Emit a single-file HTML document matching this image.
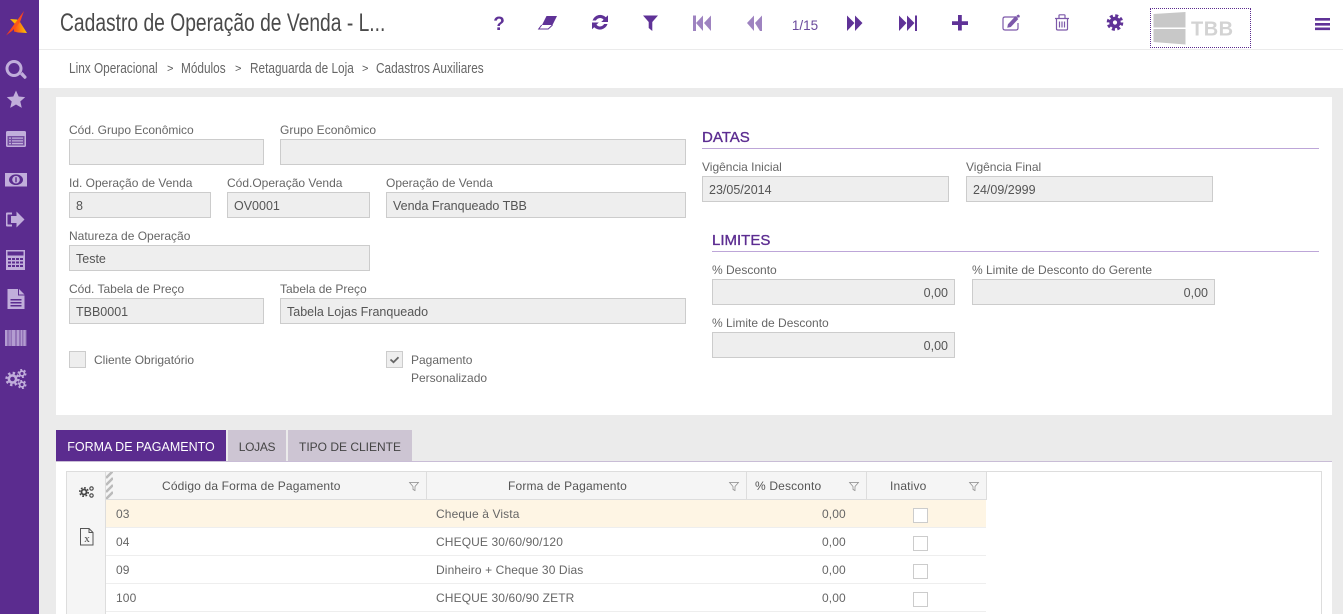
<!DOCTYPE html>
<html lang="pt-BR"><head><meta charset="utf-8"><title>Cadastro</title>
<style>
html,body{margin:0;padding:0;width:1343px;height:614px;overflow:hidden;background:#ebebeb;font-family:"Liberation Sans",sans-serif}
div,span,svg{position:absolute;box-sizing:border-box}
.t{white-space:nowrap;transform-origin:0 50%}
.l{font-size:12px;color:#666;line-height:14px;white-space:nowrap}
.f{background:#eee;border:1px solid #ccc;height:26px;font-size:12.5px;color:#555;line-height:26px;padding:0 6px;white-space:nowrap}
.r{text-align:right;padding-right:6px}
.h{font-size:15px;color:#5c2d91;line-height:18px;white-space:nowrap;-webkit-text-stroke:.35px #5c2d91}
.hl{height:1px;background:#bda6d8}
.bc{font-size:14.5px;color:#666;line-height:18px;white-space:nowrap;transform:scaleX(.815);transform-origin:0 50%}
.sep{font-size:11px;color:#555;line-height:14px}
.g{font-size:12px;color:#666;line-height:14px;white-space:nowrap;letter-spacing:.12px}
.gh{font-size:12px;color:#555;line-height:14px;white-space:nowrap;letter-spacing:.16px}
.row{left:106px;width:880px;height:28px;border-bottom:1px solid #eee;background:#fff}
.cb{width:15px;height:15px;border:1px solid #ccc;background:#fff;left:913px}
.tab{top:430px;height:31px;background:#cdc5d3;color:#444;font-size:12px;line-height:34px;text-align:center;white-space:nowrap}
</style></head><body>
<div style="left:0;top:0;width:1343px;height:88px;background:#fff"></div>
<div style="left:39px;top:49px;width:1304px;height:1px;background:#ebebeb"></div>
<div style="left:0;top:0;width:39px;height:614px;background:#5b2c8f"></div>

<svg style="left:0;top:0" width="39" height="400" viewBox="0 0 39 400">
<defs><linearGradient id="a" x1="0" y1="1" x2="1" y2="0"><stop offset="0" stop-color="#f5341c"/><stop offset=".55" stop-color="#fb5a17"/><stop offset="1" stop-color="#f93a22"/></linearGradient><linearGradient id="b" x1="0" y1="0" x2="1" y2="0"><stop offset="0" stop-color="#fb4a18"/><stop offset="1" stop-color="#fdc400"/></linearGradient></defs>
<path d="M10 19l7 .5 3 3-3.500 3z" fill="#fdbb05"/>
<path d="M14 27l6-5 7 11-9-.5-4-1z" fill="url(#b)"/>
<path d="M6 35.500L24 11l-4 11-3 4-5 5z" fill="url(#a)"/>
<g fill="#c1aedb">
<path fill-rule="evenodd" d="M14 60a8.500 8.500 0 1 0 0 17 8.500 8.500 0 0 0 0-17zm0 3a5.500 5.500 0 1 1 0 11 5.500 5.500 0 0 1 0-11z"/>
<path d="M20 74.500l2.500-2.500 4 4.500q.5 2-2 2.500z"/>
<path d="M16 90.500l2.700 6 6.500.6-4.900 4.400 1.500 6.400-5.800-3.400-5.800 3.400 1.500-6.400-4.900-4.400 6.500-.6z"/>
<rect x="6" y="131" width="20" height="16" rx="1.500"/>
<path fill="#5b2c8f" d="M7.500 136h17v9.500h-17z" opacity=".75"/>
<path d="M9 137.500h2v1.300H9zm3 0h11v1.300H12zM9 140.200h2v1.300H9zm3 0h11v1.300H12zM9 142.900h2v1.300H9zm3 0h11v1.300H12z"/>
<rect x="5" y="173" width="22" height="13.500"/>
<ellipse cx="16" cy="179.700" rx="7" ry="5.300" fill="#5b2c8f"/>
<circle cx="16" cy="179.700" r="3.800"/>
<path fill="#5b2c8f" d="M15.300 177.200h1.400v5h-1.400z"/>
<path d="M7 212.500h5v2H8q-.5 0-.5.500v9q0 .5.500.5h4v2H7q-1 0-1-1v-12q0-1 1-1z"/>
<path d="M11 216h5.500v-4.500L24.500 219.500l-8 8V223H11z"/>
<path fill-rule="evenodd" d="M6 250h19v20H6zm1.500 1.500v4h16v-4z"/>
<path fill="#5b2c8f" d="M8 258h3v2H8zm4 0h3v2h-3zm4 0h3v2h-3zm4 0h3v2h-3zM8 261.500h3v2H8zm4 0h3v2h-3zm4 0h3v2h-3zm4 0h3v2h-3zM8 265h3v2H8zm4 0h3v2h-3zm4 0h3v2h-3zm4 0h3v2h-3z"/>
<path fill-rule="evenodd" d="M7.500 289H18v6.500h6.500V309h-17zM10.500 299v1.500h11V299zm0 3v1.500h11V302zm0 3v1.500h11V305z"/>
<path d="M19 289l5.500 5.500H19z"/>
<rect x="5" y="330" width="21.500" height="16" opacity=".55"/>
<path d="M5 330h2v16H5zm4.500 0h1v16h-1zm2.500 0h3v16h-3zm5 0h2v16h-2zm4 0h1v16h-1zm2.500 0h2v16h-2z" opacity=".7"/>
<g fill="none" stroke="#c1aedb">
<circle cx="12.500" cy="379" r="3.600" stroke-width="2.600"/>
<circle cx="12.500" cy="379" r="6" stroke-width="2.400" stroke-dasharray="2.400 2.310"/>
<circle cx="22" cy="373.500" r="2.400" stroke-width="1.700"/>
<circle cx="22" cy="373.500" r="3.800" stroke-width="1.500" stroke-dasharray="2 1.980"/>
<circle cx="22" cy="384.500" r="2.400" stroke-width="1.700"/>
<circle cx="22" cy="384.500" r="3.800" stroke-width="1.500" stroke-dasharray="2 1.980"/>
</g>
</g></svg>

<div class="t" style="left:60px;top:8px;font-size:25px;line-height:30px;color:#4a4a4a;transform:scaleX(.77)">Cadastro de Operação de Venda - L...</div>

<svg style="left:480px;top:0" width="863" height="50" viewBox="480 0 863 50">
<g fill="#5f3297">
<text x="499" y="30" font-family="Liberation Sans" font-weight="700" font-size="19" text-anchor="middle">?</text>
<path d="M546.500 16H557l-4.500 9H542z"/>
<path d="M541.700 25l-3 4h9.500l4.300-4" fill="none" stroke="#5f3297" stroke-width="1"/>
<path d="M592.500 20.500a8 8 0 0 1 13.300-3.200l2.200-2.100v6.800h-6.800l2.400-2.300a4.700 4.700 0 0 0-7.700 .8zM607.500 24a8 8 0 0 1-13.300 3.200l-2.200 2.100v-6.800h6.800l-2.400 2.300a4.700 4.700 0 0 0 7.700-.8z"/>
<path d="M643 15.500h15l-5.700 6.500v9l-3.600-3v-6z"/>
<g opacity=".6"><path d="M693 15.500h3v15.500h-3zM696 23l7-7.500V31zM704 23l7-7.500V31z"/>
<path d="M747 23l7-7.500V31zM755 23l7-7.500V31h-2z"/></g>
<path d="M847 15.500l7.500 7.500-7.500 8zM855 15.500l7.500 7.500-7.500 8z"/>
<path d="M899 15.500l7.500 7.500-7.500 8zM907 15.500l7.500 7.500-7.500 8zM915 15.500h2V31h-2z"/>
<path d="M958 15h3.800v6.200h6.200v3.800h-6.200v5.500H958V25h-6v-3.800h6z"/>
</g>
<text x="805" y="30" font-size="13.500" text-anchor="middle" fill="#6a4a9c" font-family="Liberation Sans">1/15</text>
<g fill="none" stroke="#7d59aa" stroke-width="1.200">
<path d="M1018 17h-13q-2 0-2 2v9q0 2 2 2h11q2 0 2-2v-5"/>
<path d="M1008.500 24.500l-.5 2.500 2.500-.5 7-7.500-2-2z" fill="#7d59aa"/><path d="M1016.500 15.500l2-1 1.500 1.500-1 2z" fill="#7d59aa" stroke="none"/>
<path d="M1055 18.500h14M1059 18v-2.500q0-.7 .7-.7h4.600q.7 0 .7 .7V18M1056.500 18.500v10.500q0 1 1.500 1h8q1.500 0 1.500-1V18.500M1059.500 21.500v6M1062 21.500v6M1064.500 21.500v6"/>
</g>
<g fill="none" stroke="#5f3297">
<circle cx="1115" cy="22.500" r="3.900" stroke-width="3.600"/>
<circle cx="1115" cy="22.500" r="6.800" stroke-width="3" stroke-dasharray="3 2.340"/>
</g>
<path fill="#5f3297" d="M1315 18h15v2.600h-15zM1315 23h15v2.600h-15zM1315 27.500h15v2.600h-15z"/>
<path fill="#c8c8c8" d="M1153.500 14l32-2v15.500h-32zM1153.500 29h32v15.500l-32-2.500z"/>
<text x="1191" y="35.500" font-size="20" font-weight="700" letter-spacing=".5" fill="#d3d3d3" font-family="Liberation Sans">TBB</text>
</svg>
<div style="left:1150px;top:8px;width:101px;height:40px;border:1px dotted #5b2c8f"></div>

<div class="bc" style="left:69px;top:60px">Linx Operacional</div>
<div class="sep" style="left:167px;top:62px">&gt;</div>
<div class="bc" style="left:181px;top:60px">Módulos</div>
<div class="sep" style="left:235px;top:62px">&gt;</div>
<div class="bc" style="left:250px;top:60px">Retaguarda de Loja</div>
<div class="sep" style="left:362px;top:62px">&gt;</div>
<div class="bc" style="left:376px;top:60px">Cadastros Auxiliares</div>

<div style="left:56px;top:97px;width:1276px;height:318px;background:#fff"></div>

<div class="l" style="left:69px;top:123px">Cód. Grupo Econômico</div>
<div class="f" style="left:69px;top:139px;width:195px"></div>
<div class="l" style="left:280px;top:123px">Grupo Econômico</div>
<div class="f" style="left:280px;top:139px;width:406px"></div>

<div class="l" style="left:69px;top:176px">Id. Operação de Venda</div>
<div class="f" style="left:69px;top:192px;width:142px">8</div>
<div class="l" style="left:227px;top:176px">Cód.Operação Venda</div>
<div class="f" style="left:227px;top:192px;width:143px">OV0001</div>
<div class="l" style="left:386px;top:176px">Operação de Venda</div>
<div class="f" style="left:386px;top:192px;width:300px">Venda Franqueado TBB</div>

<div class="l" style="left:69px;top:229px">Natureza de Operação</div>
<div class="f" style="left:69px;top:245px;width:301px">Teste</div>

<div class="l" style="left:69px;top:282px">Cód. Tabela de Preço</div>
<div class="f" style="left:69px;top:298px;width:195px">TBB0001</div>
<div class="l" style="left:280px;top:282px">Tabela de Preço</div>
<div class="f" style="left:280px;top:298px;width:406px">Tabela Lojas Franqueado</div>

<div style="left:69px;top:351px;width:17px;height:17px;background:#eee;border:1px solid #ccc"></div>
<div class="l" style="left:94px;top:353px">Cliente Obrigatório</div>
<div style="left:386px;top:351px;width:17px;height:17px;background:#eee;border:1px solid #ccc"></div>
<svg style="left:386px;top:351px" width="17" height="17" viewBox="0 0 17 17"><path d="M4.500 8.500l3 2.700 5-5" fill="none" stroke="#666" stroke-width="1.800"/></svg>
<div class="l" style="left:411px;top:353px">Pagamento</div>
<div class="l" style="left:411px;top:371px">Personalizado</div>

<div class="h" style="left:702px;top:129px">DATAS</div>
<div class="hl" style="left:702px;top:148px;width:617px"></div>
<div class="l" style="left:702px;top:160px">Vigência Inicial</div>
<div class="f" style="left:702px;top:176px;width:247px">23/05/2014</div>
<div class="l" style="left:966px;top:160px">Vigência Final</div>
<div class="f" style="left:966px;top:176px;width:247px">24/09/2999</div>

<div class="h" style="left:712px;top:232px">LIMITES</div>
<div class="hl" style="left:712px;top:251px;width:607px"></div>
<div class="l" style="left:712px;top:263px">% Desconto</div>
<div class="f r" style="left:712px;top:279px;width:243px">0,00</div>
<div class="l" style="left:972px;top:263px">% Limite de Desconto do Gerente</div>
<div class="f r" style="left:972px;top:279px;width:243px">0,00</div>
<div class="l" style="left:712px;top:316px">% Limite de Desconto</div>
<div class="f r" style="left:712px;top:332px;width:243px">0,00</div>

<div class="tab" style="left:56px;width:170px;background:#5b2c8f;color:#fff;font-size:12.5px">FORMA DE PAGAMENTO</div>
<div class="tab" style="left:228px;width:58px;letter-spacing:-.3px">LOJAS</div>
<div class="tab" style="left:288px;width:124px">TIPO DE CLIENTE</div>
<div style="left:56px;top:461px;width:1276px;height:153px;background:#fff;border-top:1px solid #c9bdd6"></div>

<div style="left:66px;top:471px;width:1256px;height:143px;border:1px solid #ddd;border-bottom:0;background:#fff"></div>
<div style="left:67px;top:472px;width:39px;height:142px;background:#f5f5f5;border-right:1px solid #ddd"></div>
<div style="left:106px;top:472px;width:881px;height:28px;background:#f5f5f5;border-bottom:1px solid #ddd;border-right:1px solid #ddd"></div>
<div style="left:426px;top:472px;width:1px;height:27px;background:#ddd"></div>
<div style="left:746px;top:472px;width:1px;height:27px;background:#ddd"></div>
<div style="left:866px;top:472px;width:1px;height:27px;background:#ddd"></div>
<svg style="left:106px;top:472px" width="7" height="27" viewBox="0 0 7 27"><path d="M0 6l7-7M0 13l7-7M0 20l7-7M0 27l7-7" stroke="#bbb" stroke-width="2.500"/></svg>

<div class="gh" style="left:162px;top:479px">Código da Forma de Pagamento</div>
<div class="gh" style="left:508px;top:479px">Forma de Pagamento</div>
<div class="gh" style="left:755px;top:479px">% Desconto</div>
<div class="gh" style="left:890px;top:479px">Inativo</div>
<svg style="left:0;top:470px" width="1000" height="30" viewBox="0 470 1000 30"><g fill="none" stroke="#888" stroke-width=".7"><path d="M409.500 482.500h9l-3.500 4v4l-2-1v-3z"/><path d="M729.500 482.500h9l-3.500 4v4l-2-1v-3z"/><path d="M849.500 482.500h9l-3.500 4v4l-2-1v-3z"/><path d="M969.500 482.500h9l-3.500 4v4l-2-1v-3z"/></g></svg>

<svg style="left:67px;top:480px" width="39" height="70" viewBox="67 480 39 70">
<g fill="none" stroke="#444">
<circle cx="84" cy="492" r="2.500" stroke-width="1.800"/>
<circle cx="84" cy="492" r="4.200" stroke-width="1.600" stroke-dasharray="1.700 1.600"/>
<circle cx="91.500" cy="488.500" r="1.700" stroke-width="1.100"/>
<circle cx="91.500" cy="495.500" r="1.700" stroke-width="1.100"/>
</g>
<path d="M80.500 528.500h8.500l4 4v12.500H80.500zM89 528.500v4h4" fill="none" stroke="#555" stroke-width="1"/>
<text x="87" y="542" font-family="Liberation Serif" font-size="11" fill="#444" text-anchor="middle">x</text>
</svg>

<div class="row" style="top:500px;background:#fef5e4"></div>
<div class="row" style="top:528px"></div>
<div class="row" style="top:556px"></div>
<div class="row" style="top:584px"></div>

<div class="g" style="left:116px;top:507px">03</div><div class="g" style="left:436px;top:507px">Cheque à Vista</div><div class="g" style="left:822px;top:507px">0,00</div><div class="cb" style="top:508px"></div>
<div class="g" style="left:116px;top:535px">04</div><div class="g" style="left:436px;top:535px">CHEQUE 30/60/90/120</div><div class="g" style="left:822px;top:535px">0,00</div><div class="cb" style="top:536px"></div>
<div class="g" style="left:116px;top:563px">09</div><div class="g" style="left:436px;top:563px">Dinheiro + Cheque 30 Dias</div><div class="g" style="left:822px;top:563px">0,00</div><div class="cb" style="top:564px"></div>
<div class="g" style="left:116px;top:591px">100</div><div class="g" style="left:436px;top:591px">CHEQUE 30/60/90 ZETR</div><div class="g" style="left:822px;top:591px">0,00</div><div class="cb" style="top:592px"></div>
</body></html>
